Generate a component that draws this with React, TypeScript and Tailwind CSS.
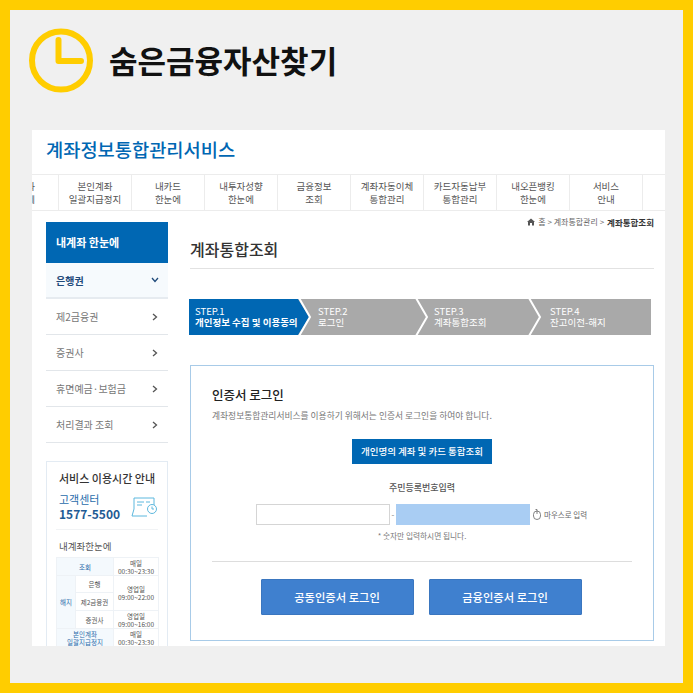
import React from 'react';

const navItems = [
  ['내계좌', '한눈에'],
  ['본인계좌', '일괄지급정지'],
  ['내카드', '한눈에'],
  ['내투자성향', '한눈에'],
  ['금융정보', '조회'],
  ['계좌자동이체', '통합관리'],
  ['카드자동납부', '통합관리'],
  ['내오픈뱅킹', '한눈에'],
  ['서비스', '안내'],
];

const sideItems = ['제2금융권', '증권사', '휴면예금·보험금', '처리결과 조회'];

const Chevron = ({ fill }: { fill: string }) => (
  <svg className="absolute left-full top-0 z-10" width="14" height="36" viewBox="0 0 14 36">
    <path d="M0 0L11 18L0 36Z" fill={fill} />
    <path d="M1 -1L12 18L1 37" fill="none" stroke="#ffffff" strokeWidth="2" />
  </svg>
);

const Step = ({ width, pad, label, text, active, last }: { width: string; pad: string; label: string; text: string; active?: boolean; last?: boolean }) => (
  <div className={`relative flex h-9 flex-col justify-center text-[9.5px] leading-[11px] text-white ${width} ${pad} ${active ? 'bg-[#0067b3]' : 'bg-[#a9a9a9]'}`}>
    <span>{label}</span>
    <span className={active ? 'font-bold' : ''}>{text}</span>
    {!last && <Chevron fill={active ? '#0067b3' : '#a9a9a9'} />}
  </div>
);

export default function App() {
  return (
    <div className="h-[693px] w-[693px] overflow-hidden border-[10px] border-[#ffcd00] bg-[#f0f0f0] font-['Noto_Sans_CJK_KR',sans-serif]">
      {/* Header */}
      <div className="flex h-[120px] items-start gap-[15px] pl-[19px] pt-[18px]">
        <svg width="65" height="65" viewBox="0 0 65 65" fill="none" stroke="#ffcd00" strokeWidth="6">
          <circle cx="32" cy="32.5" r="29" />
          <path d="M29.5 12V33H52" strokeLinecap="round" strokeLinejoin="round" />
        </svg>
        <h1 className="mt-[8px] text-[31px] font-bold leading-[48px] text-[#111111]">숨은금융자산찾기</h1>
      </div>

      {/* Site panel */}
      <div className="ml-[22px] h-[516px] w-[633px] overflow-hidden bg-white">
        <div className="flex h-[44px] items-center pb-[6px] pl-[14px] text-[18.7px] font-medium text-[#0067b3]">계좌정보통합관리서비스</div>

        <div className="flex h-[37px] overflow-hidden border-y border-[#ececec]">
          {navItems.map((item, i) => (
            <div
              key={i}
              className={`flex w-[73px] shrink-0 flex-col items-center justify-center border-r border-[#ececec] text-[9.5px] leading-[13px] text-[#555555] ${i === 0 ? 'ml-[-46px]' : ''}`}
            >
              <span>{item[0]}</span>
              <span>{item[1]}</span>
            </div>
          ))}
        </div>

        <div className="flex pl-[14px]">
          {/* Sidebar */}
          <div className="mt-[11px] w-[122px] shrink-0">
            <div className="flex h-[41px] items-center bg-[#0067b3] pl-[10px] text-[11px] font-bold text-white">내계좌 한눈에</div>
            <div className="flex h-9 items-center justify-between border-b-2 border-[#e6ebf0] bg-[#f6fafd] pl-[10px] pr-[9px] text-[10px] font-bold text-[#1f4a7a]">
              은행권
              <svg width="8" height="6" viewBox="0 0 8 6" fill="none" stroke="#1f4a7a" strokeWidth="1.3">
                <path d="M1 1L4 4.5L7 1" />
              </svg>
            </div>
            {sideItems.map((item) => (
              <div key={item} className="flex h-9 items-center justify-between border-b border-[#e2e6ea] pl-[10px] pr-[10px] text-[10px] text-[#777777]">
                {item}
                <svg width="6" height="8" viewBox="0 0 6 8" fill="none" stroke="#555555" strokeWidth="1.3">
                  <path d="M1 1L4.5 4L1 7" />
                </svg>
              </div>
            ))}

            <div className="mt-[18px] border border-[#e3ebf3] px-[9px] pb-4 pt-[9px]">
              <div className="whitespace-nowrap text-center text-[11px] font-medium leading-[15px] text-[#333333]">서비스 이용시간 안내</div>
              <div className="mt-[6px] flex items-center justify-between border-b border-[#f1f3f5] pb-[7px] pl-[3px]">
                <div>
                  <div className="text-[11px] leading-[14px] text-[#2a6cab]">고객센터</div>
                  <div className="text-[12px] font-bold leading-[16px] text-[#1f5b94]">1577-5500</div>
                </div>
                <svg width="27" height="21" viewBox="0 0 27 21" fill="none" stroke="#5db8de" strokeWidth="1">
                  <path d="M3 1H23V8M3 1V12M3 12L1 19H16M6 5H13M6 8H11M15 5H19" />
                  <circle cx="21" cy="12" r="4.5" />
                  <path d="M21 9.5V12H23" />
                </svg>
              </div>
              <div className="mt-[9px] pl-[3px] text-[9.5px] leading-[14px] text-[#555555]">내계좌한눈에</div>
              <table className="mt-[4px] w-[102px] table-fixed border-collapse text-center text-[6.5px] leading-[8px] text-[#555555]">
                <colgroup>
                  <col className="w-[19px]" />
                  <col className="w-[38px]" />
                  <col className="w-[45px]" />
                </colgroup>
                <tbody>
                  <tr className="h-[18px]">
                    <td colSpan={2} className="border border-[#eef2f6] bg-[#f4f9fd] text-[#2a6cab]">조회</td>
                    <td className="border border-[#eef2f6]">매일<br />00:30~23:30</td>
                  </tr>
                  <tr className="h-[17px]">
                    <td rowSpan={3} className="border border-[#eef2f6] bg-[#f4f9fd] text-[#2a6cab]">해지</td>
                    <td className="border border-[#eef2f6]">은행</td>
                    <td rowSpan={2} className="border border-[#eef2f6]">영업일<br />09:00~22:00</td>
                  </tr>
                  <tr className="h-[18px]">
                    <td className="border border-[#eef2f6]">제2금융권</td>
                  </tr>
                  <tr className="h-[18px]">
                    <td className="border border-[#eef2f6]">증권사</td>
                    <td className="border border-[#eef2f6]">영업일<br />09:00~16:00</td>
                  </tr>
                  <tr className="h-[18px]">
                    <td colSpan={2} className="border border-[#eef2f6] bg-[#f4f9fd] text-[#2a6cab]">본인계좌<br />일괄지급정지</td>
                    <td className="border border-[#eef2f6]">매일<br />00:30~23:30</td>
                  </tr>
                </tbody>
              </table>
            </div>
          </div>

          {/* Main */}
          <div className="ml-[22px] w-[464px] shrink-0">
            <div className="flex h-[22px] items-center justify-end gap-[3px] text-[8px] text-[#666666]">
              <svg width="8" height="8" viewBox="0 0 8 8" fill="#555555">
                <path d="M4 0.5L8 4H7V7.5H5V5H3V7.5H1V4H0Z" />
              </svg>
              <span>홈 &gt; 계좌통합관리 &gt;</span>
              <span className="text-[8.5px] font-bold text-[#333333]">계좌통합조회</span>
            </div>
            <div className="flex h-[36px] items-center border-b border-[#e2e2e2] pb-[4px] text-[16px] font-medium text-[#333333]">계좌통합조회</div>

            <div className="ml-[-1px] mt-[30px] flex">
              <Step width="w-[109px]" pad="pl-[6px]" label="STEP.1" text="개인정보 수집 및 이용동의" active />
              <Step width="w-[117px]" pad="pl-[20px]" label="STEP.2" text="로그인" />
              <Step width="w-[113px]" pad="pl-[19px]" label="STEP.3" text="계좌통합조회" />
              <Step width="w-[123px]" pad="pl-[22px]" label="STEP.4" text="잔고이전-해지" last />
            </div>

            {/* Login box */}
            <div className="mt-[30px] flex h-[276px] flex-col border border-[#a8cbe8] px-[21px] pt-[20px]">
              <h3 className="text-[12.5px] font-medium leading-[17px] text-[#222222]">인증서 로그인</h3>
              <p className="mt-[7px] text-[8.75px] leading-[12px] text-[#777777]">계좌정보통합관리서비스를 이용하기 위해서는 인증서 로그인을 하여야 합니다.</p>
              <button className="mt-[17px] h-[25px] w-[140px] self-center bg-[#0067b3] text-[9.5px] font-medium text-white">개인명의 계좌 및 카드 통합조회</button>
              <div className="mt-[18px] text-center text-[9px] font-medium leading-[12px] text-[#555555]">주민등록번호입력</div>
              <div className="ml-[44px] mt-[10px] flex h-[21px] items-center">
                <div className="h-[21px] w-[134px] border border-[#d5d5d5] bg-white" />
                <span className="w-[6px] text-center text-[8px] text-[#777777]">-</span>
                <div className="h-[21px] w-[134px] bg-[#a9cdf3]" />
                <svg className="ml-[3px]" width="8" height="11" viewBox="0 0 8 11" fill="none" stroke="#666666" strokeWidth="0.8">
                  <rect x="0.5" y="2" width="7" height="8.5" rx="3.5" />
                  <path d="M4 2V5M2.5 0.5H4V2" />
                </svg>
                <span className="ml-[3px] text-[7.5px] text-[#666666]">마우스로 입력</span>
              </div>
              <div className="mt-[5px] text-center text-[7.7px] leading-[12px] text-[#777777]">* 숫자만 입력하시면 됩니다.</div>
              <div className="mt-[19px] border-t border-[#dddddd]" />
              <div className="mt-[17px] flex justify-center gap-[15px] pr-[2px]">
                <button className="h-9 w-[153px] rounded-[1px] border border-[#3a76bf] bg-[#3f80cf] text-[11.3px] font-medium text-white">공동인증서 로그인</button>
                <button className="h-9 w-[153px] rounded-[1px] border border-[#3a76bf] bg-[#3f80cf] text-[11.3px] font-medium text-white">금융인증서 로그인</button>
              </div>
            </div>
          </div>
        </div>
      </div>
    </div>
  );
}
